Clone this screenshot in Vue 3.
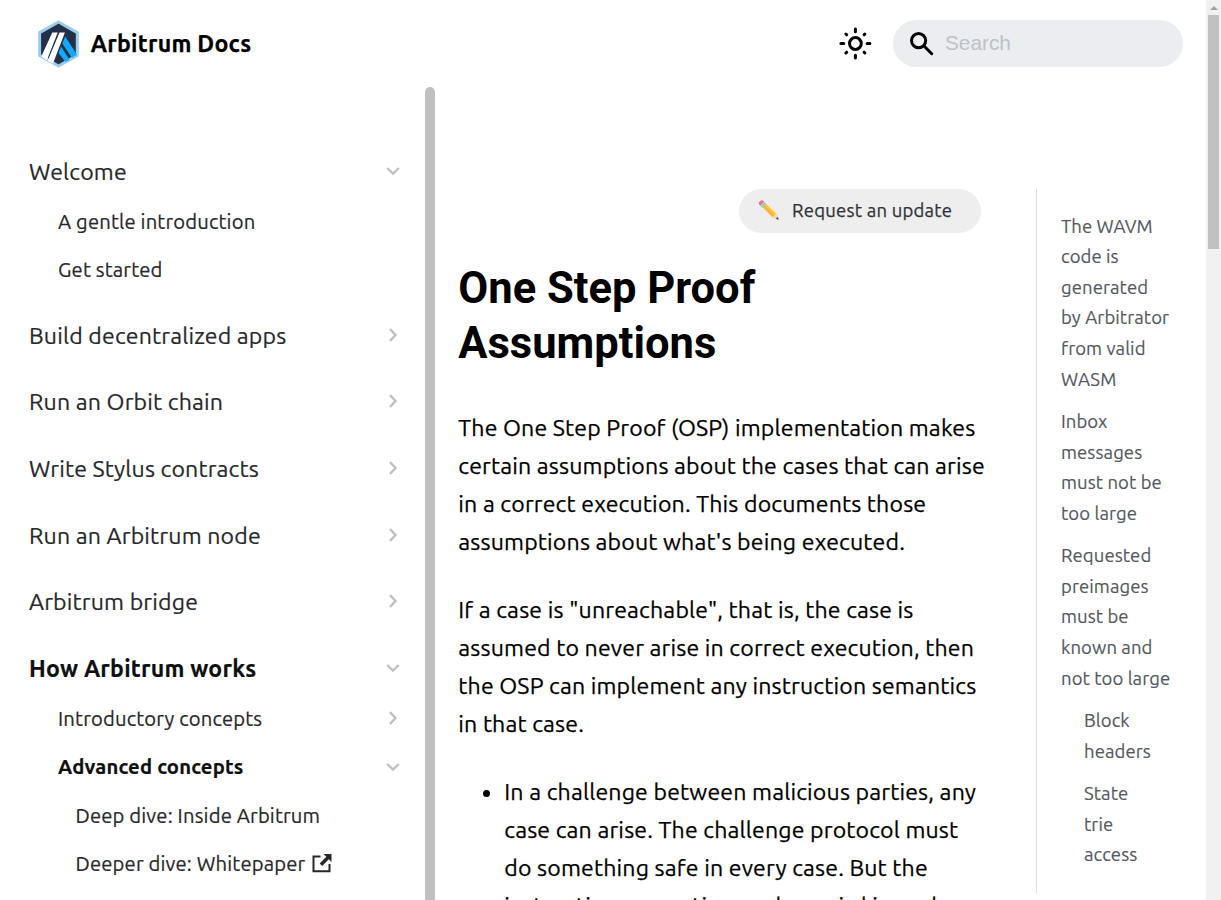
<script setup>
const menu = [
  { label: 'Welcome', open: true, children: [{ label: 'A gentle introduction' }, { label: 'Get started' }] },
  { label: 'Build decentralized apps' },
  { label: 'Run an Orbit chain' },
  { label: 'Write Stylus contracts' },
  { label: 'Run an Arbitrum node' },
  { label: 'Arbitrum bridge' },
  {
    label: 'How Arbitrum works', open: true, active: true, children: [
      { label: 'Introductory concepts', caret: true },
      {
        label: 'Advanced concepts', caret: true, open: true, active: true, children: [
          { label: 'Deep dive: Inside Arbitrum' },
          { label: 'Deeper dive: Whitepaper', external: true },
        ],
      },
    ],
  },
]
const paragraphs = [
  ['The One Step Proof (OSP) implementation makes', 'certain assumptions about the cases that can arise', 'in a correct execution. This documents those', "assumptions about what's being executed."],
  ['If a case is "unreachable", that is, the case is', 'assumed to never arise in correct execution, then', 'the OSP can implement any instruction semantics', 'in that case.'],
]
const bullet = ['In a challenge between malicious parties, any', 'case can arise. The challenge protocol must', 'do something safe in every case. But the', 'instruction semantics can be weird in such']
const toc = [
  { lines: ['The WAVM', 'code is', 'generated', 'by Arbitrator', 'from valid', 'WASM'] },
  { lines: ['Inbox', 'messages', 'must not be', 'too large'] },
  { lines: ['Requested', 'preimages', 'must be', 'known and', 'not too large'] },
  { lines: ['Block', 'headers'], nested: true },
  { lines: ['State', 'trie', 'access'], nested: true },
]
</script>

<template>
  <div class="page">
    <div class="site">
      <header class="navbar">
        <a class="brand">
          <svg class="logo" width="43" height="48" viewBox="0 0 43 48">
            <path d="M21.500 2 40.300 12.600v22.800L21.500 46 2.600 35.400V12.600Z" fill="#213147" stroke="#9dcced" stroke-width="3" stroke-linejoin="round" />
            <path d="M28.200 16.500 40 34.700 35 38 25.300 23.500Z" fill="#12aaff" />
            <path d="M24 26.500 32.500 39.700 28.500 41.900 21.600 33Z" fill="#12aaff" />
            <path d="M15.300 12.500h5.400L9.900 40.300 4.300 36.500ZM22.500 12.500h5.400L16 43.600 10.700 40.800Z" fill="#fff" />
          </svg>
          <b class="brand-name">Arbitrum Docs</b>
        </a>
        <div class="tools">
          <svg class="sun" width="34" height="34" viewBox="0 0 34 34" fill="none" stroke="#000" stroke-width="3" stroke-linecap="round">
            <circle cx="17.400" cy="16.500" r="5.900" />
            <path d="M17.400 2v2.800M17.400 28.200V31M2.900 16.500h2.800M29.100 16.500h2.800M7.900 7l.8.800M26.100 25.200l.8.800M7.900 26l.8-.8M26.100 7.800l.8-.8" />
          </svg>
          <div class="search">
            <svg width="24" height="24" viewBox="0 0 24 24" fill="none" stroke="#000" stroke-width="3">
              <circle cx="8.600" cy="8.600" r="7.100" /><path d="m13.800 13.800 7.900 7.900" stroke-linecap="round" />
            </svg>
            <span>Search</span>
          </div>
        </div>
      </header>

      <div class="body">
        <aside class="sidebar">
          <nav class="menu">
            <div v-for="g in menu" :key="g.label" class="group">
              <div class="row top" :class="{ active: g.active }">
                <span>{{ g.label }}</span>
                <svg class="caret" :class="{ open: g.open }" width="14" height="14" viewBox="0 0 14 14"><path d="M4 1.200 9.500 7l-5.500 5.800" /></svg>
              </div>
              <template v-for="c in g.children" :key="c.label">
                <div class="row sub" :class="{ active: c.active }">
                  <span>{{ c.label }}</span>
                  <svg v-if="c.caret" class="caret" :class="{ open: c.open }" width="14" height="14" viewBox="0 0 14 14"><path d="M4 1.200 9.500 7l-5.500 5.800" /></svg>
                </div>
                <div v-for="d in c.children" :key="d.label" class="row sub deep">
                  <span>{{ d.label }}</span>
                  <svg v-if="d.external" class="external" width="20" height="20" viewBox="0 0 20 20">
                    <path d="M8.500 3.500H1.500v14.800h16V11" fill="none" stroke="#26282b" stroke-width="2" />
                    <path d="M11.500 1h8v8l-2.700-2.700-6.600 6.600-2.500-2.500 6.600-6.600Z" fill="#26282b" />
                  </svg>
                </div>
              </template>
            </div>
          </nav>
          <div class="side-thumb"></div>
        </aside>

        <main class="article">
          <div class="actions">
            <a class="update">
              <svg width="22" height="22" viewBox="0 0 22 22">
                <path d="m6.500 3.300 11.800 11.200-3.800 3.800L3.300 6.500Z" fill="#ffc83d" />
                <path d="m5.400 5 11.500 11-2.300 2.200L3.300 6.500Z" fill="#f9b13b" />
                <path d="m5.300 2.200 3 2.900-3.900 3.800-2.700-2.900Z" fill="#9dc9d3" />
                <path d="M1.200 5.500Q0 4 1.800 2.200T5 1.700l1 .9L2.200 6.500Z" fill="#f2707e" />
                <path d="m18.300 14.200 2.200 5.500q.2 1-1 .8l-5.300-2.300Z" fill="#f5d6a5" />
                <path d="m19.800 18 .8 2q.1.800-.8.600l-2-.8Z" fill="#45484d" />
              </svg>
              <span>Request an update</span>
            </a>
          </div>
          <h1>One Step Proof<br>Assumptions</h1>
          <p v-for="(p, i) in paragraphs" :key="i"><span v-for="l in p" :key="l" class="line">{{ l }}</span></p>
          <ul><li><span v-for="l in bullet" :key="l" class="line">{{ l }}</span></li></ul>
        </main>

        <nav class="toc">
          <a v-for="t in toc" :key="t.lines[0]" :class="{ nested: t.nested }"><span v-for="l in t.lines" :key="l" class="line">{{ l }}</span></a>
        </nav>
      </div>
    </div>
    <div class="scrollbar"><i class="arrow"></i><i class="thumb"></i></div>
  </div>
</template>

<style>
body { overflow: hidden; }
</style>
<style scoped>
.page { display: flex; width: 1221px; height: 900px; overflow: hidden; background: #fff; font-family: Ubuntu, "Noto Sans", sans-serif; color: #000; }
.site { flex: 1; display: flex; flex-direction: column; min-width: 0; }
.navbar { flex: none; height: 87px; box-sizing: border-box; padding: 0 23px 0 37px; display: flex; justify-content: space-between; align-items: center; }
.brand { display: flex; align-items: center; gap: 10.800px; }
.brand-name { font-size: 23.120px; line-height: 38px; letter-spacing: .24px; margin-bottom: 2px; white-space: nowrap; -webkit-text-stroke: .25px; }
.tools { display: flex; align-items: center; gap: 21px; }
.search { width: 290px; height: 47px; box-sizing: border-box; border-radius: 24px; background: #ebedf0; padding: 0 0 2px 17px; display: flex; align-items: center; gap: 11px; font: 20.800px "Liberation Sans", sans-serif; color: #bcc2c8; }
.search svg { margin-top: 2px; }
.body { flex: 1; display: flex; min-height: 0; }
.sidebar { width: 435px; flex: none; display: flex; justify-content: space-between; }
.menu { width: 400.300px; box-sizing: border-box; padding: 58px 0 0 29px; display: flex; flex-direction: column; gap: 14.720px; -webkit-text-stroke: .2px; }
.group { flex: none; }
.row { display: flex; align-items: center; justify-content: space-between; white-space: nowrap; color: #26282b; letter-spacing: .16px; }
.top { height: 52px; font-size: 23.120px; }
.top.active { letter-spacing: .22px; }
.sub { height: 48.400px; font-size: 20.230px; padding-left: 29px; }
.deep { padding-left: 46.500px; justify-content: flex-start; gap: 6.500px; }
.active { font-weight: 700; color: #0e0f10; }
.caret { fill: none; stroke: #c0c0c0; stroke-width: 2.400; }
.caret.open { transform: rotate(90deg); }
.side-thumb { width: 10px; background: #c0c0c0; border-radius: 5px 5px 0 0; }
.article { width: 546px; flex: none; box-sizing: border-box; padding: 102px 0 0 23.300px; font-size: 23.120px; line-height: 38.150px; letter-spacing: .16px; -webkit-text-stroke: .25px; }
.actions { display: flex; justify-content: flex-end; }
.update { width: 242px; height: 44px; box-sizing: border-box; padding: 0 0 2px 19px; display: flex; align-items: center; gap: 12px; background: #eee; border-radius: 22px; font-size: 18.500px; letter-spacing: .23px; color: #303236; white-space: nowrap; }
h1 { margin: 28px 0 36.500px; font: 700 43.500px/55px Roboto, sans-serif; letter-spacing: 0; -webkit-text-stroke: 0; }
p { margin: 0 0 29.600px; }
.line { display: block; white-space: nowrap; }
ul { margin: 0; padding-left: 46px; }
.toc { margin: 102px 0 0 55px; width: 160px; height: 705px; box-sizing: border-box; padding: 21.700px 0 0 24px; border-left: 1px solid #dadde1; display: flex; flex-direction: column; gap: 11.800px; font-size: 18.500px; line-height: 30.600px; letter-spacing: .08px; color: #525860; -webkit-text-stroke: .15px; }
.nested { padding-left: 23px; }
.scrollbar { width: 15px; flex: none; background: #f1f1f1; display: flex; flex-direction: column; align-items: center; }
.arrow { margin: 6px 0 5px; border: 4px solid transparent; border-top: 0; border-bottom-color: #a3a3a3; }
.thumb { width: 11px; height: 234px; background: #c1c1c1; }
</style>
